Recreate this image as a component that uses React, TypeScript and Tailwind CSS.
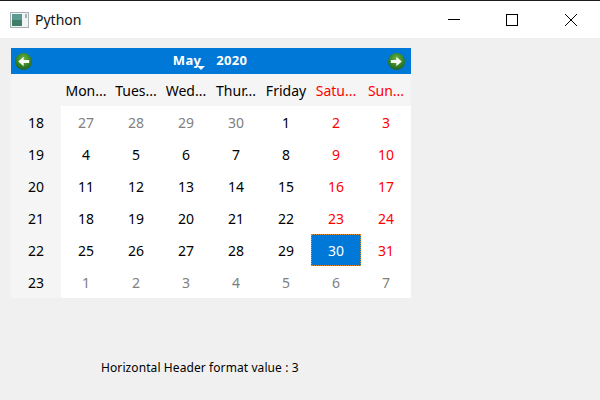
const FONT = "font-['Noto_Sans','Open_Sans',sans-serif]";

const headers = [
  { label: "Mon...", red: false },
  { label: "Tues...", red: false },
  { label: "Wed...", red: false },
  { label: "Thur...", red: false },
  { label: "Friday", red: false },
  { label: "Satu...", red: true },
  { label: "Sun...", red: true },
];

const weeks = [
  { week: 18, days: [27, 28, 29, 30, 1, 2, 3] },
  { week: 19, days: [4, 5, 6, 7, 8, 9, 10] },
  { week: 20, days: [11, 12, 13, 14, 15, 16, 17] },
  { week: 21, days: [18, 19, 20, 21, 22, 23, 24] },
  { week: 22, days: [25, 26, 27, 28, 29, 30, 31] },
  { week: 23, days: [1, 2, 3, 4, 5, 6, 7] },
];

function isOtherMonth(row: number, day: number) {
  return (row === 0 && day > 20) || (row === 5 && day < 10);
}

function NavArrow({ direction }: { direction: "left" | "right" }) {
  return (
    <svg width="17" height="17" viewBox="0 0 18 18">
      <defs>
        <radialGradient id={`nav-${direction}`} cx="50%" cy="35%" r="65%">
          <stop offset="0%" stopColor="#6cb648" />
          <stop offset="70%" stopColor="#2f7f22" />
          <stop offset="100%" stopColor="#23602c" />
        </radialGradient>
      </defs>
      <circle cx="9" cy="9" r="9" fill={`url(#nav-${direction})`} />
      <path
        d={
          direction === "left"
            ? "M15 7.4H9.2V4L3.4 9l5.8 5v-3.4H15z"
            : "M3 7.4h5.8V4L14.6 9l-5.8 5v-3.4H3z"
        }
        fill="#f6f9f4"
      />
    </svg>
  );
}

function TitleBar() {
  return (
    <div className="flex h-[38px] items-center border-t border-t-[#1c1c1c] bg-white">
      <svg className="ml-[10px]" width="19" height="16" viewBox="0 0 19 16">
        <rect x="0.5" y="0.5" width="18" height="15" fill="#f2f4f4" stroke="#a9b0b3" />
        <rect x="2" y="2" width="10" height="12" fill="#5a9a92" />
        <rect x="2" y="8" width="10" height="6" fill="#3f7f6a" />
        <rect x="15" y="2" width="2" height="4" fill="#9fb4bb" />
      </svg>
      <span className="ml-[6px] text-[14px] leading-none text-[#111]">Python</span>
      <div className="ml-auto flex">
        <div className="flex h-[36px] w-[58px] items-center justify-center pr-[2px]">
          <div className="h-px w-3 bg-black" />
        </div>
        <div className="flex h-[36px] w-[58px] items-center justify-center pr-[2px]">
          <div className="h-3 w-3 border border-black" />
        </div>
        <div className="flex h-[36px] w-[58px] items-center justify-center">
          <svg width="12" height="12" viewBox="0 0 12 12">
            <path d="M0 0l12 12M12 0L0 12" stroke="#000" strokeWidth="1" fill="none" />
          </svg>
        </div>
      </div>
    </div>
  );
}

function Calendar() {
  return (
    <div className="ml-[11px] mt-[10px] w-[400px] text-[14px]">
      <div className="flex h-[26px] items-center justify-between bg-[#0078d7] pl-[4px] pr-[6px]">
        <NavArrow direction="left" />
        <div className="relative flex text-[13px] font-bold tracking-[0.3px] text-white">
          <span>May</span>
          <span className="ml-[15px]">2020</span>
          <svg className="absolute left-[24px] top-[15px]" width="8" height="4" viewBox="0 0 8 4">
            <path d="M0 0h8L4 4z" fill="#fff" />
          </svg>
        </div>
        <NavArrow direction="right" />
      </div>
      <div className="grid h-[32px] grid-cols-[repeat(8,50px)] items-center bg-[#f5f5f5] text-center text-black">
        <div />
        {headers.map((h) => (
          <div key={h.label} className={h.red ? "text-[#f00]" : ""}>
            {h.label}
          </div>
        ))}
      </div>
      {weeks.map((w, row) => (
        <div key={w.week} className="grid h-[32px] grid-cols-[repeat(8,50px)] bg-white text-center">
          <div className="flex items-center justify-center bg-[#f5f5f5] text-black">{w.week}</div>
          {w.days.map((day, col) => {
            const selected = row === 4 && col === 5;
            const muted = isOtherMonth(row, day);
            const weekend = col >= 5;
            let color = "text-black";
            if (muted) color = "text-[#808080]";
            else if (weekend) color = "text-[#f00]";
            if (selected) color = "text-white bg-[#0078d7] border border-dotted border-[#e08a2c]";
            return (
              <div key={col} className={`flex items-center justify-center ${color}`}>
                {day}
              </div>
            );
          })}
        </div>
      ))}
    </div>
  );
}

export default function App() {
  return (
    <div className={`flex h-[400px] w-[600px] flex-col overflow-hidden bg-[#f0f0f0] ${FONT}`}>
      <TitleBar />
      <Calendar />
      <div className="ml-[101px] mt-[62px] text-[12px] leading-[16px] tracking-[0.09px] text-black">
        Horizontal Header format value : 3
      </div>
    </div>
  );
}
